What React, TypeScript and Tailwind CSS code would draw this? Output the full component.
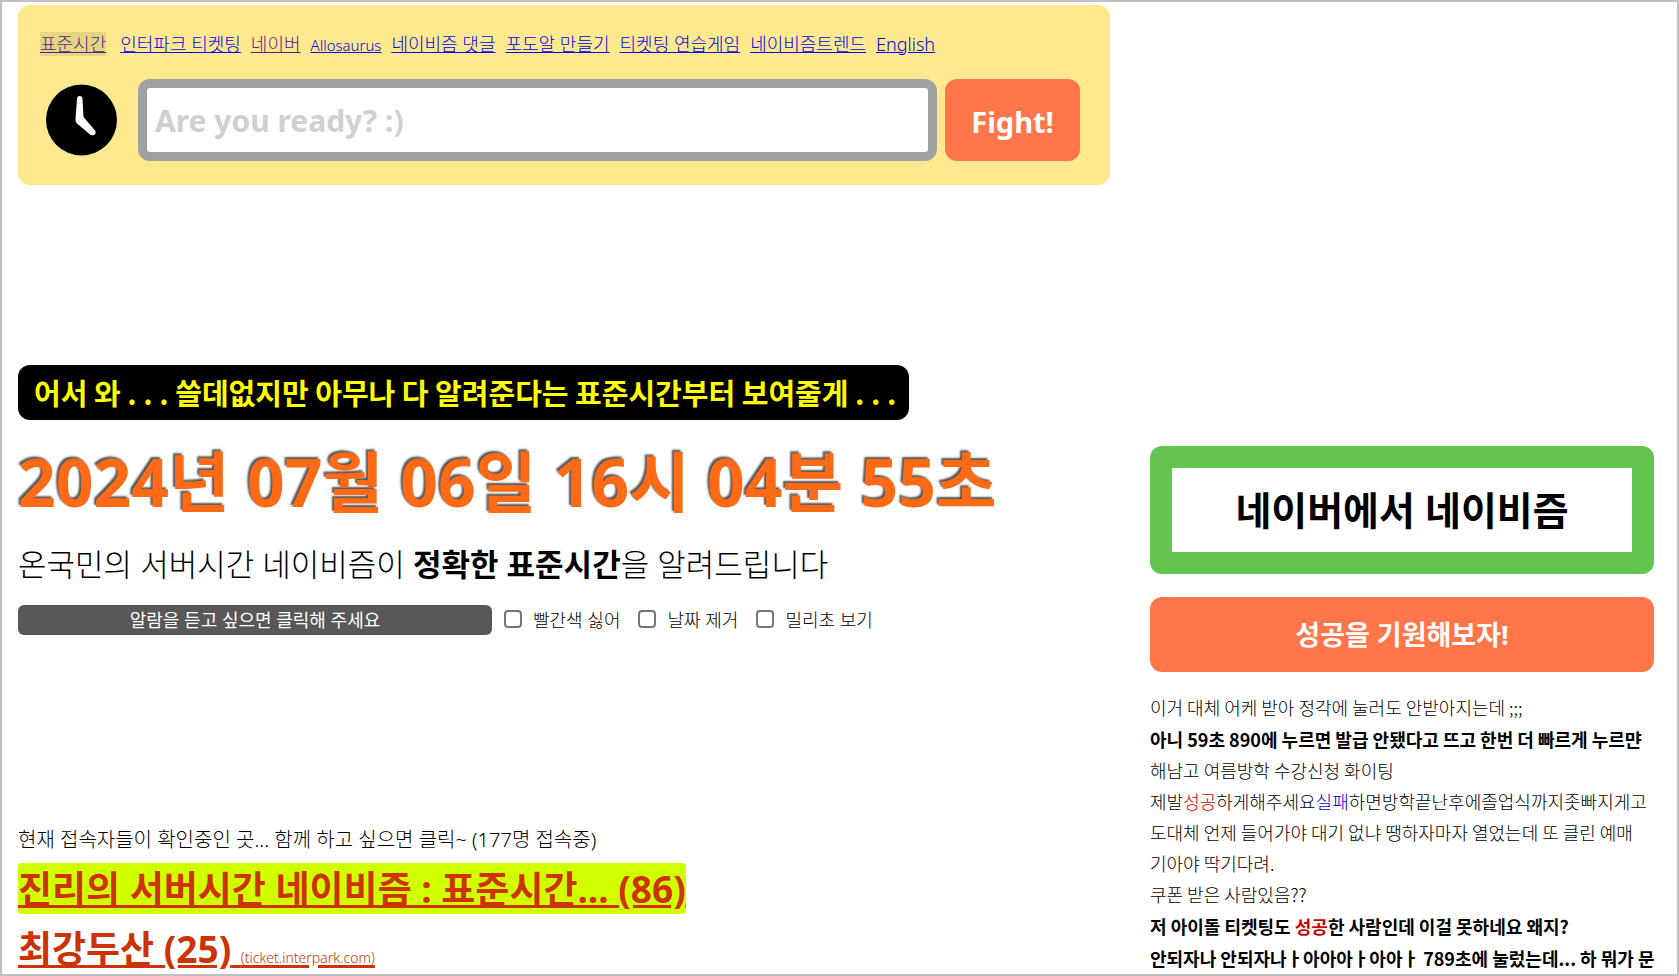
import { useState } from "react";

const LINKS = [
  { label: "인터파크 티켓팅", color: "text-[#0000ee]" },
  { label: "네이버", color: "text-[#551a8b]" },
  { label: "Allosaurus", color: "text-[#0000ee] text-[15px]" },
  { label: "네이비즘 댓글", color: "text-[#0000ee]" },
  { label: "포도알 만들기", color: "text-[#0000ee]" },
  { label: "티켓팅 연습게임", color: "text-[#0000ee]" },
  { label: "네이비즘트렌드", color: "text-[#0000ee]" },
  { label: "English", color: "text-[#0000ee]" },
];

const OPTIONS = [
  { id: "no-red", label: "빨간색 싫어" },
  { id: "no-date", label: "날짜 제거" },
  { id: "millis", label: "밀리초 보기" },
];

const ClockIcon = () => (
  <svg viewBox="0 0 72 72" className="h-[72px] w-[72px] shrink-0" aria-hidden="true">
    <circle cx="36.5" cy="36" r="35.5" fill="#000" />
    <path
      d="M32 15 Q32 12 34.7 12 Q37.4 12 37.5 15 L38.5 33 L50 46.5 Q51.5 49 49.5 50.8 Q47 52 45 50.5 L31.5 39 Q30.3 37.5 30.5 35 Z"
      fill="#fff"
    />
  </svg>
);

const Header = () => {
  const [query, setQuery] = useState("");

  return (
    <header className="rounded-xl bg-[#ffe98e] pt-[22px] pr-[30px] pb-6 pl-[22px]">
      <nav className="flex items-baseline gap-[10px] leading-[34px] whitespace-nowrap">
        <a href="#time" className="mr-1 text-[#551a8b] underline">
          <span className="bg-[#e5d680]">표준시간</span>
        </a>
        {LINKS.map((link) => (
          <a key={link.label} href="#link" className={`underline ${link.color}`}>
            {link.label}
          </a>
        ))}
      </nav>
      <form
        className="mt-[17px] flex items-center pl-[5px]"
        onSubmit={(e) => e.preventDefault()}
      >
        <ClockIcon />
        <input
          type="text"
          aria-label="서버 주소"
          value={query}
          onChange={(e) => setQuery(e.target.value)}
          placeholder="Are you ready? :)"
          className="ml-[21px] h-[82px] min-w-0 flex-1 rounded-xl border-[9px] border-[#a0a0a0] bg-white px-2 text-[30px] font-bold outline-none placeholder:text-[#d0d0d0]"
        />
        <button
          type="submit"
          className="ml-2 h-[82px] w-[135px] rounded-xl bg-[#ff764b] pt-1 text-[29px] font-bold text-white"
        >
          Fight!
        </button>
      </form>
    </header>
  );
};

const StandardTime = () => (
  <section className="mt-[180px]">
    <p className="w-fit rounded-xl bg-black pr-3 pl-4 font-['Noto_Sans_CJK_KR',sans-serif] text-[29px] leading-[55px] font-bold whitespace-nowrap text-[#ffff00]">
      어서 와 . . . 쓸데없지만 아무나 다 알려준다는 표준시간부터 보여줄게 . . .
    </p>
    <h1 className="mt-[10px] text-[66px] leading-[102px] font-bold whitespace-nowrap text-[#ff6a16] [text-shadow:-2px_-2px_2px_#555]">
      2024년 07월 06일 16시 04분 55초
    </h1>
    <h2 className="mt-[10px] text-[31px] leading-[44px] font-light">
      온국민의 서버시간 네이비즘이 <b className="font-bold">정확한 표준시간</b>을 알려드립니다
    </h2>
    <div className="mt-[19px] flex items-center">
      <button
        type="button"
        className="mr-3 h-[30px] w-[474px] rounded-md bg-[#585858] font-normal text-white"
      >
        알람을 듣고 싶으면 클릭해 주세요
      </button>
      {OPTIONS.map((option) => (
        <div key={option.id} className="mr-[18px] flex items-center gap-[11px]">
          <input
            type="checkbox"
            id={option.id}
            className="mb-[2px] h-[18px] w-[18px] appearance-none rounded border-2 border-[#767676] bg-white checked:bg-[#767676]"
          />
          <label htmlFor={option.id}>{option.label}</label>
        </div>
      ))}
    </div>
  </section>
);

const Visitors = () => (
  <section className="mt-[189px] whitespace-nowrap">
    <p className="text-[20px] leading-[32px]">
      현재 접속자들이 확인중인 곳... 함께 하고 싶으면 클릭~ (177명 접속중)
    </p>
    <ul className="mt-2 flex flex-col gap-[10px] text-[37px] leading-[50px] font-bold text-[#cc3300]">
      <li>
        <a href="#navyism" className="rounded bg-[#d2ff00] underline">
          진리의 서버시간 네이비즘 : 표준시간... (86)
        </a>
      </li>
      <li>
        <a href="#interpark" className="underline">
          최강두산 (25){" "}
          <small className="text-[14px] leading-none font-light">(ticket.interpark.com)</small>
        </a>
      </li>
    </ul>
  </section>
);

const Sidebar = () => (
  <aside className="pt-[441px]">
    <a
      href="#naver"
      className="block rounded-xl bg-[#63c54f] p-[22px] text-center text-[39px] leading-[84px] font-bold"
    >
      <span className="block bg-white">네이버에서 네이비즘</span>
    </a>
    <button
      type="button"
      className="mt-[23px] h-[75px] w-full rounded-xl bg-[#ff764b] pt-[2px] text-[27px] font-bold text-white"
    >
      성공을 기원해보자!
    </button>
    <ul className="mt-5 font-['Noto_Sans_CJK_KR',sans-serif] leading-[31px] whitespace-nowrap">
      <li>이거 대체 어케 받아 정각에 눌러도 안받아지는데 ;;;</li>
      <li className="mt-px font-bold">
        아니 59초 890에 누르면 발급 안됐다고 뜨고 한번 더 빠르게 누르먄
      </li>
      <li>해남고 여름방학 수강신청 화이팅</li>
      <li>
        제발<span className="text-[#cc0000]">성공</span>하게해주세요
        <span className="text-[#0000cc]">실패</span>하면방학끝난후에졸업식까지좃빠지게고
      </li>
      <li>
        도대체 언제 들어가야 대기 없냐 땡하자마자 열었는데 또 클린 예매
        <br />
        기아야 딱기다려.
      </li>
      <li>쿠폰 받은 사람있음??</li>
      <li className="mt-px font-bold">
        저 아이돌 티켓팅도 <span className="text-[#cc0000]">성공</span>한 사람인데 이걸 못하네요 왜지?
      </li>
      <li className="mt-px font-bold">
        안되자나 안되자나ㅏ아아아ㅏ아아ㅏ 789초에 눌렀는데... 하 뭐가 문
      </li>
    </ul>
  </aside>
);

const App = () => {
  return (
    <div className="grid min-h-screen grid-cols-[minmax(0,1fr)_504px] gap-10 border-2 border-[#c0c0c0] bg-white pt-[3px] pr-[23px] pl-4 font-['Noto_Sans','Noto_Sans_CJK_KR',sans-serif] text-[18px] font-light text-black">
      <main>
        <Header />
        <StandardTime />
        <Visitors />
      </main>
      <Sidebar />
    </div>
  );
};

export default App;
